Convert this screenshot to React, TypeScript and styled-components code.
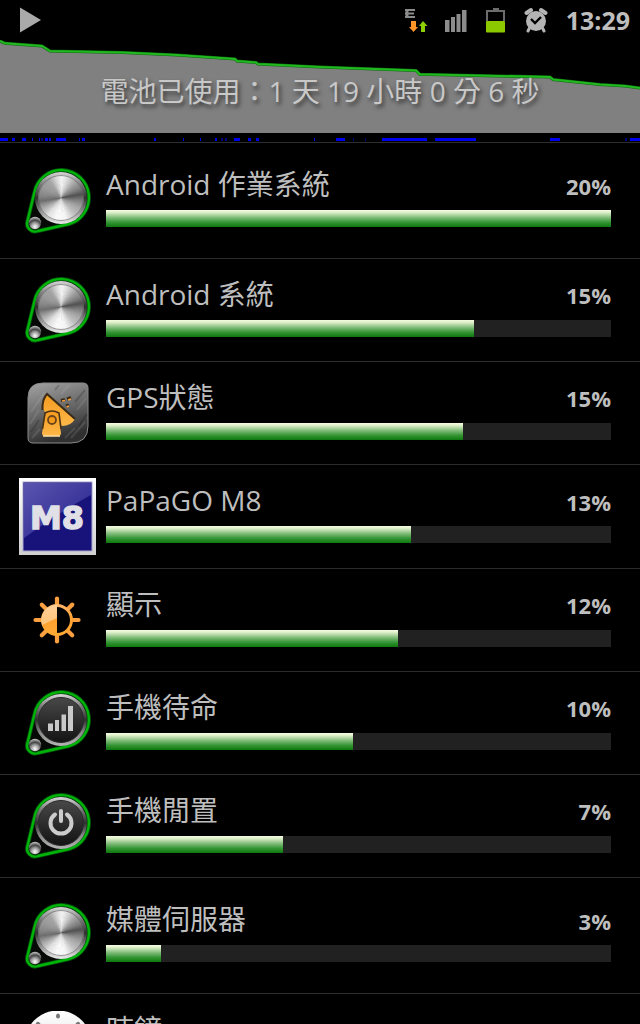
import React from 'react';
import styled, { createGlobalStyle } from 'styled-components';

const Global = createGlobalStyle`
  * { box-sizing: border-box; }
  html, body { margin: 0; background: #000; }
  body { color: #bebebe; font-family: "Open Sans", "Noto Sans CJK TC", sans-serif; }
`;

const Screen = styled.main`
  display: flex;
  flex-direction: column;
  height: 100vh;
  overflow: hidden;
`;

const StatusBar = styled.div`
  display: flex;
  align-items: center;
  justify-content: space-between;
  height: 40px;
  padding: 0 10px 0 20px;
  flex: none;
`;

const StatusIcons = styled.div`
  display: flex;
  align-items: center;
  gap: 16px;
`;

const Clock = styled.time`
  margin-left: 2px;
  font-size: 25px;
  line-height: 32px;
  font-weight: 700;
`;

const Graph = styled.header`
  position: relative;
  display: flex;
  align-items: center;
  justify-content: center;
  height: 93px;
  padding-top: 8px;
  flex: none;
`;

const Curve = styled.svg`
  position: absolute;
  inset: 0;
  width: 100%;
  height: 100%;
`;

const Title = styled.h1`
  position: relative;
  margin: 0;
  color: #c8c8c8;
  font-size: 28px;
  line-height: 36px;
  font-weight: 400;
  text-shadow: 2px 3px 4px #333;
`;

const Timeline = styled.svg`
  display: block;
  width: 100%;
  height: 10px;
  border-bottom: 1px solid #2c2c2c;
  flex: none;
`;

const List = styled.ul`
  margin: 0;
  padding: 0;
  list-style: none;
  flex: 1;
  min-height: 0;
  overflow-y: auto;
  scrollbar-width: none;
`;

const Row = styled.li<{ $tall?: boolean }>`
  display: flex;
  align-items: center;
  min-height: ${(p) => (p.$tall ? 116 : 103)}px;
  padding: 13px 29px 13px 19px;
  border-bottom: 1px solid #2c2c2c;
`;

const IconBox = styled.div`
  display: flex;
  justify-content: center;
  width: 77px;
  margin-right: 10px;
  flex: none;
  svg { display: block; }
`;

const Details = styled.div`
  flex: 1;
  min-width: 0;
`;

const Labels = styled.div`
  display: flex;
  justify-content: space-between;
  align-items: center;
  height: 36px;
  margin-bottom: 8px;
`;

const Name = styled.span`
  font-size: 28px;
  line-height: 36px;
`;

const Percent = styled.span`
  padding-top: 3px;
  font-size: 22px;
  line-height: 30px;
  font-weight: 700;
`;

const Track = styled.div`
  height: 17px;
  margin-bottom: 8px;
  background: #212121;
`;

const Fill = styled.div`
  height: 100%;
  background: linear-gradient(#f4fbe0 0%, #e4f3cf 12%, #7fbb78 45%, #369636 72%, #0c780c 100%);
`;

const segments: [number, number, boolean?][] = [
  [0, 8], [12, 3], [22, 4], [32, 1], [39, 1], [41, 2, true], [45, 3], [49, 2], [56, 10], [79, 1],
  [82, 3], [154, 2], [183, 1], [200, 1], [215, 2], [221, 2, true], [225, 2, true], [234, 6],
  [248, 3], [256, 3], [314, 1], [336, 9], [353, 1, true], [365, 1, true], [382, 45], [435, 41],
  [550, 10], [625, 2, true], [630, 10],
];

const curve =
  'M0 1 L5 3.300 L42 6 L50 11 L123 12.500 L177 15 L235 19 L237 21 L256 22.500 L258 24 L320 27 L416 30.500 L420 34.500 L430 34.500 L550 37 L553 39.500 L600 44.500 L625 46 L640 48';

type KnobKind = 'metal' | 'signal' | 'power';

/* Wedges approximate the sheen of turned aluminium around the centre. */
const shades: [number, number][] = [
  [0, 245], [18, 215], [40, 165], [62, 125], [78, 80], [94, 125], [115, 165], [140, 195],
  [165, 245], [190, 250], [215, 225], [240, 165], [260, 110], [275, 135], [300, 155], [325, 165], [345, 215], [360, 245],
];

const shadeAt = (a: number) => {
  const i = Math.max(1, shades.findIndex(([d]) => d >= a));
  const [d0, v0] = shades[i - 1];
  const [d1, v1] = shades[i];
  return Math.round(v0 + ((v1 - v0) * (a - d0)) / (d1 - d0));
};

const wedges = Array.from({ length: 90 }, (_, i) => {
  const at = (deg: number) => {
    const r = (deg * Math.PI) / 180;
    return `${(35 + 23 * Math.sin(r)).toFixed(2)} ${(32 - 23 * Math.cos(r)).toFixed(2)}`;
  };
  const v = shadeAt(i * 4);
  return { d: `M35 32 L${at(i * 4)} L${at(i * 4 + 6)}Z`, fill: `rgb(${v},${v},${v})` };
});

function Knob({ kind, id }: { kind: KnobKind; id: string }) {
  return (
    <svg width="68" height="68" viewBox="-2 1 68 68" aria-hidden="true">
      <defs>
        <linearGradient id={`${id}r`} x1="0" y1="0" x2="0" y2="1">
          <stop offset="0" stopColor="#d8d8d8" />
          <stop offset=".25" stopColor="#777" />
          <stop offset=".5" stopColor="#303030" />
          <stop offset=".75" stopColor="#8c8c8c" />
          <stop offset="1" stopColor={kind === 'metal' ? '#eee' : '#b4b4b4'} />
        </linearGradient>
        <linearGradient id={`${id}f`} x1="0" y1="0" x2="0" y2="1">
          <stop offset="0" stopColor="#484848" />
          <stop offset="1" stopColor="#131313" />
        </linearGradient>
        <radialGradient id={`${id}b`} cx=".5" cy=".8" r=".8">
          <stop offset="0" stopColor="#fff" />
          <stop offset=".4" stopColor="#999" />
          <stop offset=".65" stopColor="#444" />
          <stop offset="1" stopColor="#ccc" />
        </radialGradient>
      </defs>
      <path d="M8.500 26 A27.500 27.500 0 1 1 43 58 L12 65 A8 8 0 0 1 1.500 55Z" fill="#060906" stroke="#00510a" strokeWidth="4" strokeLinejoin="round" />
      <path d="M8.500 26 A27.500 27.500 0 1 1 43 58 L12 65 A8 8 0 0 1 1.500 55Z" fill="none" stroke="#00b40a" strokeWidth="2.400" strokeLinejoin="round" />
      <circle cx="35" cy="32" r="26" fill={`url(#${id}r)`} />
      {kind === 'metal' ? (
        <g>
          {wedges.map((w) => <path key={w.d} d={w.d} fill={w.fill} />)}
          <circle cx="35" cy="32" r="22.500" fill="none" stroke="#555" strokeOpacity=".6" />
        </g>
      ) : (
        <circle cx="35" cy="32" r="22.500" fill={`url(#${id}f)`} stroke="#292929" />
      )}
      {kind === 'signal' && (
        <g fill="#c9c9c9">
          <rect x="22" y="35.500" width="5" height="7.500" />
          <rect x="29" y="32" width="4" height="11" />
          <rect x="35.500" y="26.500" width="4.500" height="16.500" />
          <rect x="42" y="18" width="5" height="25" />
        </g>
      )}
      {kind === 'power' && (
        <g fill="none" stroke="#ccc" strokeWidth="4" strokeLinecap="round">
          <path d="M29 23.500 A10.500 10.500 0 1 0 41 23.500" />
          <path d="M35 20 V30" />
        </g>
      )}
      <circle cx="9" cy="57" r="6.200" fill={`url(#${id}b)`} />
    </svg>
  );
}

function GpsIcon() {
  return (
    <svg width="62" height="62" viewBox="0 0 62 62" aria-hidden="true">
      <defs>
        <linearGradient id="gps" x1="0" y1="0" x2=".3" y2="1">
          <stop offset="0" stopColor="#a4a4a4" />
          <stop offset=".5" stopColor="#6c6c6c" />
          <stop offset="1" stopColor="#303030" />
        </linearGradient>
        <linearGradient id="gpsO" x1="0" y1="0" x2="0" y2="1">
          <stop offset="0" stopColor="#f39a1e" />
          <stop offset="1" stopColor="#ffb849" />
        </linearGradient>
      </defs>
      <path d="M16 1 H56 Q61 1 61 6 V44 Q61 61 44 61 H6 Q1 61 1 56 V16 Q1 1 16 1Z" fill="url(#gps)" stroke="#8a8a8a" />
      <path d="M4 30 L18 10 M3 42 L12 28 M34 12 L42 3 M44 56 L58 40 M5 56 L13 47 M50 28 L59 16 M38 56 L48 46" stroke="#ccc" strokeOpacity=".14" strokeWidth="2" />
      <path d="M28 8 L32 3 M4 50 L12 38 M48 20 L58 8 M52 44 L60 32" stroke="#000" strokeOpacity=".18" strokeWidth="2" />
      <path d="M20 12 L48 37 Q44 44 35 44 L18 30 L15 25 Q15 17 20 12Z" fill="url(#gpsO)" />
      <path d="M15.500 28 Q15 17 20 12 L48 37" fill="none" stroke="#3a2c18" strokeWidth="2" />
      <path d="M19 30 Q25 27 31 30 L34 51 Q34 54 31 54 H18 Q15 54 15 51Z" fill="url(#gpsO)" />
      <path d="M15.500 47 L18 31 Q25 27 32 31 L34 47" fill="none" stroke="#4b3214" strokeWidth="1.600" />
      <path d="M16 54 H33" stroke="#ffe0a6" strokeWidth="1.500" />
      <circle cx="25" cy="38" r="4" fill="#f49a1d" stroke="#6b451a" strokeWidth="1.800" />
      <path d="M34 18.500 L38 17.500 M40 17 L44 15.500 M39 24 L42 23" stroke="#3a2c18" strokeWidth="3" />
      <path d="M35 19 L38 18.500 M41 18 L44 17 M39.500 25 L42 24" stroke="#f2a037" strokeWidth="1.600" />
    </svg>
  );
}

function M8Icon() {
  return (
    <svg width="77" height="77" viewBox="0 0 77 77" aria-hidden="true">
      <defs>
        <linearGradient id="m8f" x1="0" y1="0" x2="0" y2="1">
          <stop offset="0" stopColor="#fff" />
          <stop offset="1" stopColor="#cfcfcf" />
        </linearGradient>
        <linearGradient id="m8s" x1="0" y1="0" x2="1" y2="1">
          <stop offset="0" stopColor="#5a55ae" />
          <stop offset="1" stopColor="#25208c" />
        </linearGradient>
      </defs>
      <rect width="77" height="77" fill="url(#m8f)" />
      <rect x="4" y="4" width="69" height="69" fill="#18137a" stroke="#aaa8d0" />
      <path d="M5 5 H72 V17 Q44 32 5 60Z" fill="url(#m8s)" />
      <text x="38" y="51" textAnchor="middle" fontFamily="DejaVu Sans, sans-serif" fontWeight="700" fontSize="32" fill="#e0e0e6" stroke="#e0e0e6" strokeWidth="1.400">M8</text>
    </svg>
  );
}

function BrightnessIcon() {
  return (
    <svg width="50" height="48" viewBox="0 0 50 48" aria-hidden="true">
      <defs>
        <linearGradient id="sun" gradientUnits="userSpaceOnUse" x1="0" y1="0" x2="0" y2="48">
          <stop offset="0" stopColor="#ffc28a" />
          <stop offset=".5" stopColor="#ffa02f" />
          <stop offset="1" stopColor="#ffb03a" />
        </linearGradient>
      </defs>
      {[0, 45, 90, 135, 180, 225, 270, 315].map((a) => (
        <path key={a} d="M24 10 V2.500" transform={`rotate(${a} 24 24)`} stroke="#fba040" strokeWidth="4.200" strokeLinecap="round" />
      ))}
      <circle cx="24" cy="24" r="14.500" fill="#000" stroke="url(#sun)" strokeWidth="3" />
      <path d="M24 10 A14 14 0 0 0 24 38Z" fill="url(#sun)" />
      <path d="M24 9 A15 15 0 0 0 9 29 L24 22Z" fill="#ffe0b8" fillOpacity=".6" />
    </svg>
  );
}

function ClockIcon() {
  return (
    <svg width="68" height="68" viewBox="0 1 68 68" aria-hidden="true">
      <defs>
        <linearGradient id="dial" x1="0" y1="0" x2="0" y2="1">
          <stop offset="0" stopColor="#fff" />
          <stop offset="1" stopColor="#ccc" />
        </linearGradient>
      </defs>
      <circle cx="34" cy="34" r="33.500" fill="url(#dial)" />
      {Array.from({ length: 8 }, (_, i) => (
        <ellipse key={i} cx="34" cy="6" rx="2" ry="2.500" fill="#777" transform={`rotate(${i * 45} 34 34)`} />
      ))}
      <path d="M34 16 V34 L46 42" fill="none" stroke="#444" strokeWidth="3" />
    </svg>
  );
}

const items: { name: string; percent: number; width: number; icon: React.ReactNode; tall?: boolean }[] = [
  { name: 'Android 作業系統', percent: 20, width: 100, icon: <Knob kind="metal" id="k1" />, tall: true },
  { name: 'Android 系統', percent: 15, width: 72.8, icon: <Knob kind="metal" id="k2" /> },
  { name: 'GPS狀態', percent: 15, width: 70.6, icon: <GpsIcon /> },
  { name: 'PaPaGO M8', percent: 13, width: 60.3, icon: <M8Icon /> },
  { name: '顯示', percent: 12, width: 57.9, icon: <BrightnessIcon /> },
  { name: '手機待命', percent: 10, width: 48.9, icon: <Knob kind="signal" id="k3" /> },
  { name: '手機閒置', percent: 7, width: 35, icon: <Knob kind="power" id="k4" /> },
  { name: '媒體伺服器', percent: 3, width: 10.8, icon: <Knob kind="metal" id="k5" />, tall: true },
  { name: '時鐘', percent: 2, width: 8, icon: <ClockIcon /> },
];

export default function App() {
  return (
    <Screen>
      <Global />
      <StatusBar>
        <svg width="22" height="26" viewBox="0 0 22 26" aria-hidden="true">
          <path d="M0 0.500 L21 13 L0 25.500Z" fill="#aaa" />
        </svg>
        <StatusIcons>
          <svg width="24" height="26" viewBox="0 0 24 26" aria-hidden="true">
            <path d="M1 3 H11 M1 6.500 H10 M1 10 H11" fill="none" stroke="#8b8b8b" strokeWidth="2" />
            <path d="M3 2 V11" stroke="#8b8b8b" strokeWidth="3" />
            <path d="M7 14 H12 V20 H14 L9.500 25 L5 20 H7Z" fill="#ff9428" />
            <path d="M17 25 V19 H15 L19 14 L23.500 19 H21 V25Z" fill="#8dcf00" />
          </svg>
          <svg width="24" height="26" viewBox="0 0 24 26" aria-hidden="true">
            <path d="M1 13 H5.500 V25 H1Z M7 10 H11 V25 H7Z M12.500 7 H16.500 V25 H12.500Z M18 3 H22.500 V25 H18Z" fill="#8c8c8c" />
          </svg>
          <svg width="24" height="26" viewBox="0 0 24 26" aria-hidden="true">
            <path d="M3 14 V4 H20 V14" fill="none" stroke="#6c6c6c" strokeWidth="2" />
            <path d="M9 2 H15" stroke="#6c6c6c" strokeWidth="2" />
            <rect x="2" y="14" width="19" height="11.500" rx="1" fill="#8cc800" />
          </svg>
          <svg width="24" height="26" viewBox="0 0 24 26" aria-hidden="true">
            <circle cx="12" cy="14" r="10" fill="#b4b4b4" />
            <path d="M2.500 6 L7 3 M21.500 6 L17 3" stroke="#b4b4b4" strokeWidth="4" strokeLinecap="round" />
            <path d="M5.500 21 L4 24 M18.500 21 L20 24" stroke="#b4b4b4" strokeWidth="3" strokeLinecap="round" />
            <path d="M7 12 L11 16 L17 10" fill="none" stroke="#000" strokeWidth="2.400" />
          </svg>
          <Clock>13:29</Clock>
        </StatusIcons>
      </StatusBar>
      <Graph>
        <Curve viewBox="0 0 640 93" preserveAspectRatio="none" aria-hidden="true">
          <path d={`${curve} V93 H0Z`} fill="#808080" />
          <path d={curve} fill="none" stroke="#0a6a0a" strokeWidth="3" />
          <path d={curve} fill="none" stroke="#22b822" strokeWidth="2" />
        </Curve>
        <Title>電池已使用：1 天 19 小時 0 分 6 秒</Title>
      </Graph>
      <Timeline viewBox="0 0 640 9" preserveAspectRatio="none" aria-hidden="true">
        {segments.map(([x, w, dim]) => (
          <rect key={x} x={x} y="5" width={w} height="3" fill={dim ? '#000080' : '#0000f0'} />
        ))}
      </Timeline>
      <List>
        {items.map((item) => (
          <Row key={item.name} $tall={item.tall}>
            <IconBox>{item.icon}</IconBox>
            <Details>
              <Labels>
                <Name>{item.name}</Name>
                <Percent>{item.percent}%</Percent>
              </Labels>
              <Track>
                <Fill style={{ width: `${item.width}%` }} />
              </Track>
            </Details>
          </Row>
        ))}
      </List>
    </Screen>
  );
}
